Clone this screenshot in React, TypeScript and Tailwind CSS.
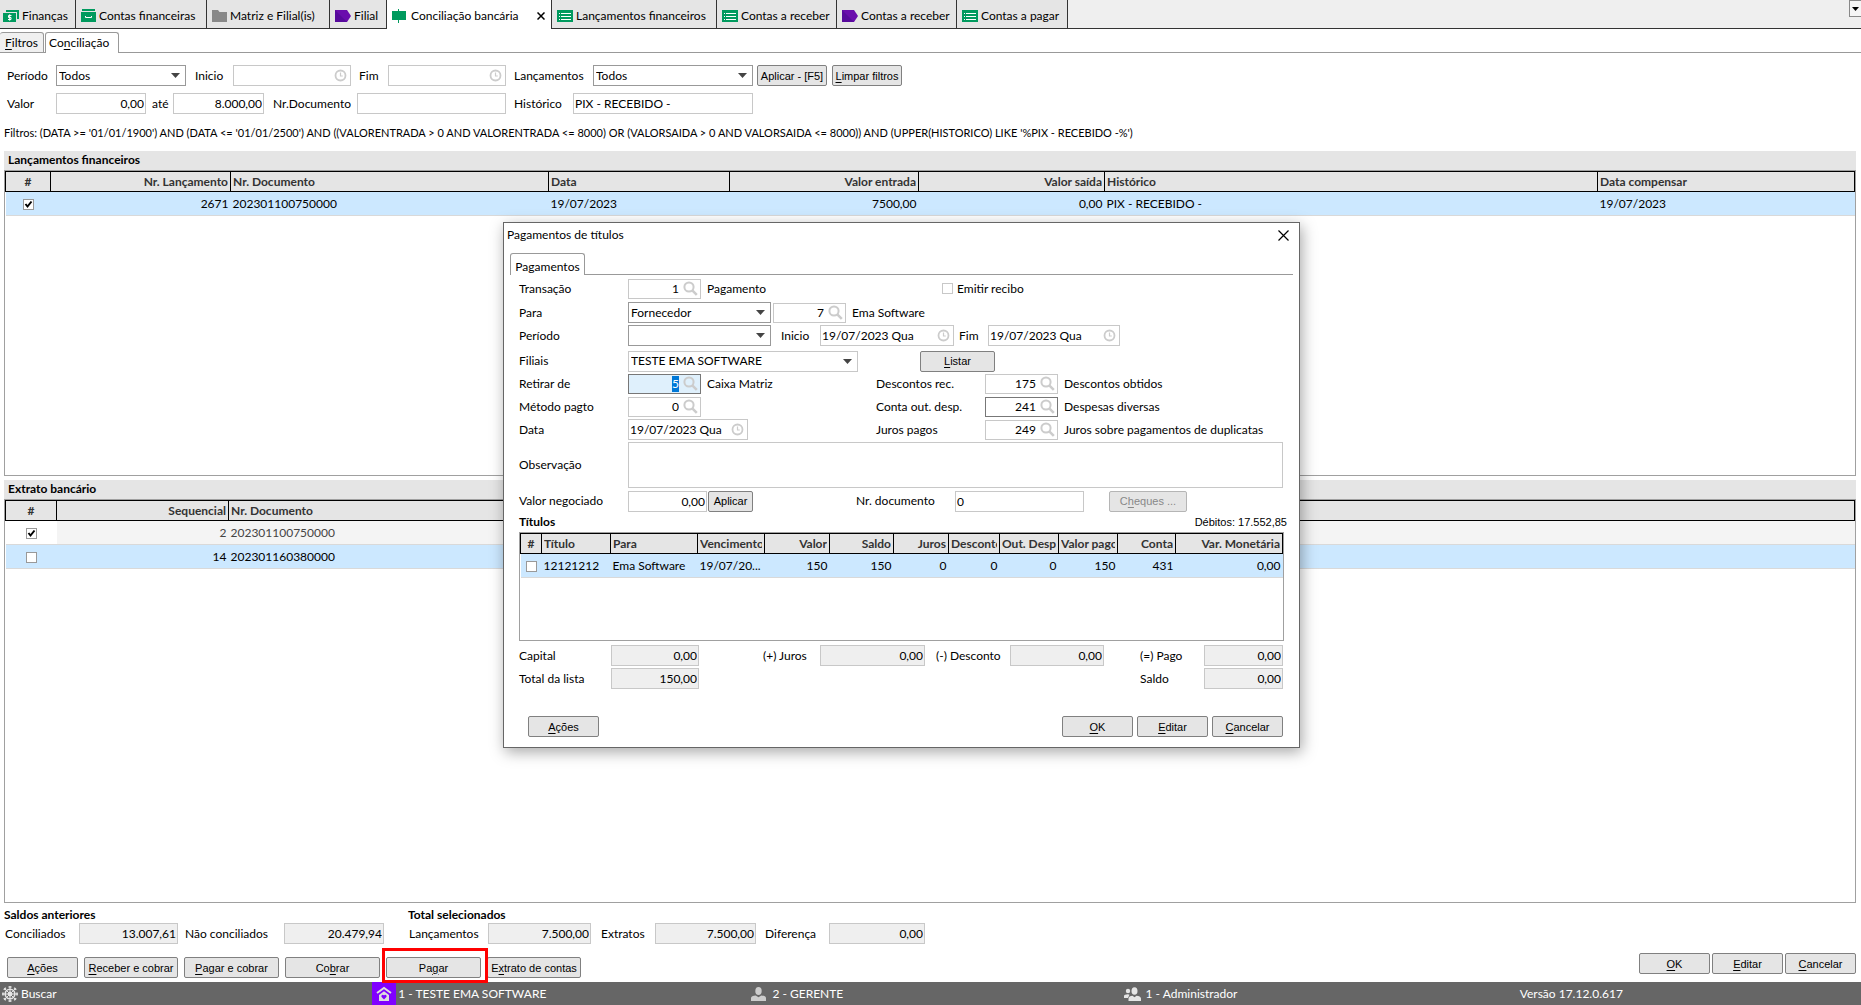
import { useEffect, useRef, type ReactNode } from "react";
import clsx from "clsx";

const text = "font-[Lato,'Open_Sans',sans-serif] text-[12px] leading-4 text-black";

/* "&Pagar" -> underlined P */
function Mnemonic({ label }: { label: string }) {
  const at = label.indexOf("&");
  if (at < 0) return <>{label}</>;
  return (
    <span>
      {label.slice(0, at)}
      <u className="underline-offset-2">{label[at + 1]}</u>
      {label.slice(at + 2)}
    </span>
  );
}

/* Icons */
function MoneyIcon() {
  return (
    <svg width="16" height="12" viewBox="0 0 16 12">
      <path d="M3 0h13v9h-2V2H3z" fill="#009a5e" />
      <rect y="3" width="13" height="9" fill="#009a5e" />
      <path
        d="M8.5 5.5h-3v2h2.5v2h-3M6.7 4.3v6.4"
        fill="none"
        stroke="#fff"
        strokeWidth="1"
      />
    </svg>
  );
}

function DrawerIcon() {
  return (
    <svg width="15" height="13" viewBox="0 0 15 13">
      <path d="M1 0h13v2H1zM0 3h15v10H0z" fill="#009a5e" />
      <path d="M4.500 7v1.500h6V7" fill="none" stroke="#fff" />
    </svg>
  );
}

function FolderIcon() {
  return (
    <svg width="15" height="12" viewBox="0 0 15 12">
      <path d="M0 0h6l1.500 2H15v10H0z" fill="#888" />
    </svg>
  );
}

function TagIcon() {
  return (
    <svg width="16" height="12" viewBox="0 0 16 12">
      <path d="M0 0h12l4 6-4 6H0z" fill="#6a0dad" />
      <path d="M0 0l12 12H0z" fill="#570a9c" />
    </svg>
  );
}

function SignIcon() {
  return (
    <svg width="14" height="14" viewBox="0 0 14 14">
      <path d="M0 2h14v9H0zM6 0h1v14H6z" fill="#009a5e" />
    </svg>
  );
}

function ListIcon() {
  return (
    <svg width="16" height="12" viewBox="0 0 16 12">
      <rect width="16" height="12" fill="#009a5e" />
      <path
        d="M2 3.500h1M2 6.500h1M2 9.500h1M4 3.500h10M4 6.500h10M4 9.500h10"
        stroke="#fff"
        strokeWidth="1"
      />
    </svg>
  );
}

function SearchIcon() {
  return (
    <svg width="15" height="15" viewBox="0 0 15 15" className="shrink-0">
      <circle cx="6" cy="6" r="4.600" fill="none" stroke="#ccc" strokeWidth="2" />
      <path d="M9.300 9.300l4.500 4.500" stroke="#ccc" strokeWidth="2.600" />
    </svg>
  );
}

function ClockIcon() {
  return (
    <svg width="13" height="13" viewBox="0 0 13 13" className="shrink-0">
      <circle cx="6.500" cy="6.500" r="5" fill="none" stroke="#ccc" strokeWidth="1.800" />
      <path d="M6.500 3.500v3.500h2.300" fill="none" stroke="#ccc" strokeWidth="1.200" />
    </svg>
  );
}

function WheelIcon() {
  return (
    <svg width="16" height="16" viewBox="0 0 16 16" stroke="#e5e5e5" fill="none">
      <circle cx="8" cy="8" r="4.800" strokeWidth="1.600" />
      <circle cx="8" cy="8" r="1.700" strokeWidth="1.400" />
      <path d="M8 0v16M0 8h16M2.400 2.400l11.200 11.200M13.600 2.400L2.400 13.600" />
      <path
        d="M6.500 1h3M6.500 15h3M1 6.500v3M15 6.500v3M1.800 3.800l2-2M12.200 1.800l2 2M1.800 12.200l2 2M12.200 14.200l2-2"
        strokeWidth="1.500"
      />
    </svg>
  );
}

function HomeIcon() {
  return (
    <svg width="16" height="16" viewBox="0 0 16 16">
      <path d="M1 7L8 2l7 5" fill="none" stroke="#ddd" strokeWidth="2" />
      <path d="M3 9l5-3.800L13 9v6H3z" fill="#ddd" />
      <path
        d="M8 13.500L5.600 11a1.400 1.400 0 0 1 2.400-1.600 1.400 1.400 0 0 1 2.400 1.600z"
        fill="#8000ff"
      />
    </svg>
  );
}

function UserIcon() {
  return (
    <svg width="15" height="14" viewBox="0 0 15 14" fill="#ccc">
      <ellipse cx="7.500" cy="4" rx="3.200" ry="4" />
      <path d="M0 14v-3c0-1.500 2-2.300 4.700-2.500l2.800 1.800 2.800-1.800C13 8.700 15 9.500 15 11v3z" />
    </svg>
  );
}

function UsersIcon() {
  return (
    <svg width="17" height="14" viewBox="0 0 17 14" fill="#e5e5e5">
      <circle cx="4" cy="4" r="2.200" />
      <path d="M0 11V9c0-1 1.500-1.800 4-1.800l1.500.6L4 11z" />
      <ellipse cx="10.500" cy="4" rx="3" ry="3.800" />
      <path d="M4.500 14v-2.500c0-1.500 1.800-2.500 4-2.700l2 1.500 2-1.500c2.500.2 4.500 1.200 4.500 2.700V14z" />
    </svg>
  );
}

/* Form controls */
function Field({
  label,
  width,
  className,
  children,
}: {
  label: string;
  width: string;
  className?: string;
  children: ReactNode;
}) {
  return (
    <label className={clsx("flex items-center whitespace-nowrap", className)}>
      <span className={clsx("shrink-0", width)}>{label}</span>
      {children}
    </label>
  );
}

function TextBox({
  value = "",
  width,
  right,
  readOnly,
}: {
  value?: string;
  width: string;
  right?: boolean;
  readOnly?: boolean;
}) {
  return (
    <input
      type="text"
      defaultValue={value}
      readOnly={readOnly}
      className={clsx(
        "h-[21px] border border-[#c8c8c8] px-px outline-none",
        readOnly ? "bg-[#efefef]" : "bg-white",
        right && "text-right",
        width,
      )}
    />
  );
}

function DateBox({ value = "", width }: { value?: string; width: string }) {
  return (
    <span
      className={clsx(
        "flex h-[21px] items-center border border-[#c8c8c8] bg-white pr-[3px] pl-px",
        width,
      )}
    >
      <input
        type="text"
        defaultValue={value}
        className="w-full min-w-0 outline-none"
      />
      <ClockIcon />
    </span>
  );
}

function CodeBox({
  value,
  label,
  active,
  strong,
}: {
  value: string;
  label?: string;
  active?: boolean;
  strong?: boolean;
}) {
  const ref = useRef<HTMLInputElement>(null);

  useEffect(() => {
    if (active) {
      ref.current?.focus();
      ref.current?.select();
    }
  }, [active]);

  return (
    <span
      className={clsx(
        "flex h-5 w-[73px] items-center gap-1 border pr-[2px]",
        active ? "border-[#777] bg-[#dff0fc]" : "bg-white",
        !active && (strong ? "border-[#777]" : "border-[#c8c8c8]"),
      )}
    >
      <input
        ref={ref}
        type="text"
        aria-label={label}
        defaultValue={value}
        className="w-full min-w-0 text-right outline-none selection:bg-[#0078d7] selection:text-white"
      />
      <SearchIcon />
    </span>
  );
}

function Select({
  value = "",
  width,
  light,
}: {
  value?: string;
  width: string;
  light?: boolean;
}) {
  return (
    <span className={clsx("relative flex h-[21px]", width)}>
      <select
        defaultValue={value}
        className={clsx(
          "w-full appearance-none border bg-white pr-5 pl-[2px] outline-none",
          light ? "border-[#c8c8c8]" : "border-[#999]",
        )}
      >
        <option>{value}</option>
      </select>
      <svg
        width="9"
        height="5"
        viewBox="0 0 9 5"
        className="pointer-events-none absolute top-2 right-[6px]"
      >
        <path d="M0 0h9L4.500 5z" fill="#444" />
      </svg>
    </span>
  );
}

function Button({
  label,
  width,
  disabled,
}: {
  label: string;
  width: string;
  disabled?: boolean;
}) {
  return (
    <button
      type="button"
      disabled={disabled}
      className={clsx(
        "h-[21px] shrink-0 rounded-[2px] border bg-[#e5e5e5] font-['Liberation_Sans',Arial,sans-serif] text-[11px] leading-4 whitespace-nowrap",
        disabled ? "border-[#b5b5b5] text-[#888]" : "border-[#808080]",
        width,
      )}
    >
      <Mnemonic label={label} />
    </button>
  );
}

function CheckBox({ label, checked }: { label: string; checked?: boolean }) {
  return (
    <span className="relative inline-flex size-[11px] align-middle">
      <input
        type="checkbox"
        aria-label={label}
        defaultChecked={checked}
        className="peer size-[11px] appearance-none border border-[#999] bg-white"
      />
      <svg
        width="11"
        height="11"
        viewBox="0 0 11 11"
        className="pointer-events-none absolute inset-0 hidden peer-checked:block"
      >
        <path d="M2.500 5l2 2.500 4-5" fill="none" stroke="#000" strokeWidth="2" />
      </svg>
    </span>
  );
}

/* Grid */
type Column = { title: string; width: string; right?: boolean; center?: boolean };
type Row = {
  checked?: boolean;
  selected?: boolean;
  cells: string[];
};

function DataGrid({ columns, rows }: { columns: Column[]; rows: Row[] }) {
  return (
    <div className="min-h-0 flex-1 overflow-hidden border border-[#a0a0a0] bg-white">
      <table className="w-full table-fixed border-collapse">
        <colgroup>
          {columns.map((c) => (
            <col key={c.title} className={c.width} />
          ))}
        </colgroup>
        <thead>
          <tr className="h-5 bg-[#e5e5e5]">
            {columns.map((c) => (
              <th
                key={c.title}
                className={clsx(
                  "border border-black px-[2px] py-0 font-bold text-[#333]",
                  c.center ? "text-center" : c.right ? "text-right" : "text-left",
                )}
              >
                <div className="overflow-hidden whitespace-nowrap">{c.title}</div>
              </th>
            ))}
          </tr>
        </thead>
        <tbody>
          {rows.map((row) => (
            <tr
              key={row.cells.join()}
              className={clsx(
                "h-6 border-b border-[#d9d9d9]",
                row.selected ? "bg-[#cce8ff]" : "bg-[#f4f4f4] text-[#444]",
              )}
            >
              <td
                className={clsx(
                  "p-0 text-center leading-none",
                  !row.selected && "bg-white",
                )}
              >
                <CheckBox label={"Selecionar " + row.cells[0]} checked={row.checked} />
              </td>
              {row.cells.map((cell, i) => (
                <td
                  key={i}
                  className={clsx(
                    "overflow-hidden px-[2px] py-0 whitespace-nowrap",
                    columns[i + 1].right && "text-right",
                  )}
                >
                  {cell}
                </td>
              ))}
            </tr>
          ))}
        </tbody>
      </table>
    </div>
  );
}

/* Data */
const tabs = [
  { label: "Finanças", icon: <MoneyIcon />, width: "w-[76px] pl-[3px]" },
  { label: "Contas financeiras", icon: <DrawerIcon />, width: "w-[131px] pl-[5px]" },
  { label: "Matriz e Filial(is)", icon: <FolderIcon />, width: "w-[123px] pl-[5px]" },
  { label: "Filial", icon: <TagIcon />, width: "w-[57px] pl-[5px]" },
  { label: "Conciliação bancária", icon: <SignIcon />, width: "w-[165px] pl-[5px]", active: true },
  { label: "Lançamentos financeiros", icon: <ListIcon />, width: "w-[165px] pl-[5px]" },
  { label: "Contas a receber", icon: <ListIcon />, width: "w-[120px] pl-[5px]" },
  { label: "Contas a receber", icon: <TagIcon />, width: "w-[120px] pl-[5px]" },
  { label: "Contas a pagar", icon: <ListIcon />, width: "w-[111px] pl-[5px]" },
];

const lancamentoColumns: Column[] = [
  { title: "#", width: "w-[45px]", center: true },
  { title: "Nr. Lançamento", width: "w-[180px]", right: true },
  { title: "Nr. Documento", width: "w-[318px]" },
  { title: "Data", width: "w-[181px]" },
  { title: "Valor entrada", width: "w-[189px]", right: true },
  { title: "Valor saída", width: "w-[186px]", right: true },
  { title: "Histórico", width: "w-[493px]" },
  { title: "Data compensar", width: "w-auto" },
];

const lancamentos: Row[] = [
  {
    checked: true,
    selected: true,
    cells: ["2671", "202301100750000", "19/07/2023", "7500,00", "0,00", "PIX - RECEBIDO -", "19/07/2023"],
  },
];

const extratoColumns: Column[] = [
  { title: "#", width: "w-[51px]", center: true },
  { title: "Sequencial", width: "w-[172px]", right: true },
  { title: "Nr. Documento", width: "w-auto" },
];

const extratos: Row[] = [
  { checked: true, cells: ["2", "202301100750000"] },
  { selected: true, cells: ["14", "202301160380000"] },
];

const tituloColumns: Column[] = [
  { title: "#", width: "w-[21px]", center: true },
  { title: "Título", width: "w-[69px]" },
  { title: "Para", width: "w-[87px]" },
  { title: "Vencimento", width: "w-[67px]" },
  { title: "Valor", width: "w-[65px]", right: true },
  { title: "Saldo", width: "w-[64px]", right: true },
  { title: "Juros", width: "w-[55px]", right: true },
  { title: "Desconto", width: "w-[51px]", right: true },
  { title: "Out. Desp", width: "w-[59px]", right: true },
  { title: "Valor pago", width: "w-[59px]", right: true },
  { title: "Conta", width: "w-[58px]", right: true },
  { title: "Var. Monetária", width: "w-auto", right: true },
];

const titulos: Row[] = [
  {
    selected: true,
    cells: ["12121212", "Ema Software", "19/07/20...", "150", "150", "0", "0", "0", "150", "431", "0,00"],
  },
];

function TopTabs() {
  return (
    <nav className="flex h-[29px] bg-[#efefef]">
      {tabs.map((tab, i) => (
        <div
          key={i}
          className={clsx(
            "flex shrink-0 items-center border-r border-[#333] pt-[3px]",
            tab.active ? "bg-white" : "border-b bg-[#e5e5e5]",
            tab.width,
          )}
        >
          <button
            type="button"
            className={clsx(
              "flex items-center whitespace-nowrap",
              tab.active ? "gap-[5px]" : "gap-[3px]",
            )}
          >
            {tab.icon}
            {tab.label}
          </button>
          {tab.active && (
            <button type="button" aria-label="Fechar" className="mr-[6px] ml-auto">
              <svg width="8" height="8" viewBox="0 0 8 8">
                <path d="M.5 .5l7 7M7.500 .5l-7 7" stroke="#000" strokeWidth="1.500" />
              </svg>
            </button>
          )}
        </div>
      ))}
      <div className="flex flex-1 justify-end border-b border-[#333]">
        <button
          type="button"
          aria-label="Mais abas"
          className="flex h-[17px] w-3 items-center justify-center border border-r-0 border-[#888] bg-[#f5f5f5]"
        >
          <svg width="7" height="4" viewBox="0 0 7 4">
            <path d="M0 0h7L3.500 4z" />
          </svg>
        </button>
      </div>
    </nav>
  );
}

function Filters() {
  return (
    <form className="flex flex-col gap-[7px] pt-3 pl-[7px]">
      <div className="flex items-center">
        <Field label="Período" width="w-[49px]">
          <Select value="Todos" width="w-[130px]" />
        </Field>
        <Field label="Inicio" width="w-[38px]" className="ml-[9px]">
          <DateBox width="w-[118px]" />
        </Field>
        <Field label="Fim" width="w-[29px]" className="ml-2">
          <DateBox width="w-[118px]" />
        </Field>
        <Field label="Lançamentos" width="w-[79px]" className="ml-2">
          <Select value="Todos" width="w-[160px]" />
        </Field>
        <div className="ml-1 flex gap-[5px]">
          <Button label="Aplicar - [F5]" width="w-[70px]" />
          <Button label="&Limpar filtros" width="w-[70px]" />
        </div>
      </div>
      <div className="flex items-center">
        <Field label="Valor" width="w-[49px]">
          <TextBox value="0,00" width="w-[90px]" right />
        </Field>
        <Field label="até" width="w-[21px]" className="ml-[6px]">
          <TextBox value="8.000,00" width="w-[91px]" right />
        </Field>
        <Field label="Nr.Documento" width="w-[84px]" className="ml-[9px]">
          <TextBox width="w-[149px]" />
        </Field>
        <Field label="Histórico" width="w-[59px]" className="ml-2">
          <TextBox value="PIX - RECEBIDO -" width="w-[180px]" />
        </Field>
      </div>
    </form>
  );
}

function Totals() {
  return (
    <section className="flex px-1">
      <div className="w-[404px]">
        <h2 className="font-bold">Saldos anteriores</h2>
        <div className="flex">
          <Field label="Conciliados" width="w-[74px]" className="pl-px">
            <TextBox value="13.007,61" width="w-[99px]" right readOnly />
          </Field>
          <Field label="Não conciliados" width="w-[99px]" className="ml-[7px]">
            <TextBox value="20.479,94" width="w-[100px]" right readOnly />
          </Field>
        </div>
      </div>
      <div>
        <h2 className="font-bold">Total selecionados</h2>
        <div className="flex">
          <Field label="Lançamentos" width="w-[79px]" className="pl-px">
            <TextBox value="7.500,00" width="w-[103px]" right readOnly />
          </Field>
          <Field label="Extratos" width="w-[54px]" className="ml-[10px]">
            <TextBox value="7.500,00" width="w-[101px]" right readOnly />
          </Field>
          <Field label="Diferença" width="w-[64px]" className="ml-[9px]">
            <TextBox value="0,00" width="w-[96px]" right readOnly />
          </Field>
        </div>
      </div>
    </section>
  );
}

function Actions() {
  return (
    <section className="flex justify-between pt-[9px] pr-[5px] pb-1 pl-[7px]">
      <div className="flex gap-[6px] pt-1">
        <Button label="&Ações" width="w-[71px]" />
        <Button label="&Receber e cobrar" width="w-[94px]" />
        <Button label="&Pagar e cobrar" width="w-[95px]" />
        <Button label="Co&brar" width="w-[95px]" />
        <div className="relative flex">
          <Button label="Pa&gar" width="w-[95px]" />
          <span className="pointer-events-none absolute -top-[9px] -right-[7px] -bottom-[5px] -left-1 z-10 border-3 border-[#ff0000]" />
        </div>
        <Button label="E&xtrato de contas" width="w-[94px]" />
      </div>
      <div className="flex gap-[2px]">
        <Button label="&OK" width="w-[71px]" />
        <Button label="&Editar" width="w-[71px]" />
        <Button label="&Cancelar" width="w-[71px]" />
      </div>
    </section>
  );
}

function StatusBar() {
  return (
    <footer className="grid h-[23px] grid-cols-[20%_20%_20%_20%_20%] bg-[#666] text-white">
      <div className="flex items-center gap-[3px] pl-[2px]">
        <WheelIcon />
        Buscar
      </div>
      <div className="flex items-center gap-[2px]">
        <span className="flex h-full w-6 items-center justify-center bg-[#8000ff]">
          <HomeIcon />
        </span>
        1 - TESTE EMA SOFTWARE
      </div>
      <div className="flex items-center gap-[6px] pl-[7px]">
        <UserIcon />2 - GERENTE
      </div>
      <div className="flex items-center gap-[5px] pl-[7px]">
        <UsersIcon />1 - Administrador
      </div>
      <div className="flex items-center pl-[31px]">Versão 17.12.0.617</div>
    </footer>
  );
}

function PaymentDialog() {
  return (
    <div
      role="dialog"
      aria-label="Pagamentos de títulos"
      className="absolute top-[222px] left-[503px] z-20 flex w-[797px] flex-col border border-[#666] bg-white pb-[10px] shadow-[2px_4px_14px_rgba(0,0,0,0.35)]"
    >
      <header className="flex h-6 items-center justify-between pr-[10px] pl-[3px]">
        <h1>Pagamentos de títulos</h1>
        <button type="button" aria-label="Fechar">
          <svg width="11" height="11" viewBox="0 0 11 11">
            <path d="M.5 .5l10 10M10.500 .5l-10 10" stroke="#000" strokeWidth="1.200" />
          </svg>
        </button>
      </header>

      <div className="mt-[6px] flex px-[6px]">
        <button
          type="button"
          className="h-[22px] w-[75px] rounded-t-[3px] border border-b-0 border-[#999] pt-1"
        >
          Pagamentos
        </button>
        <div className="flex-1 border-b border-[#999]" />
      </div>

      <div className="flex flex-col gap-[2px] pt-[3px] pr-[16px] pl-[15px]">
        <div className="flex h-[21px] items-center">
          <Field label="Transação" width="w-[109px]">
            <CodeBox value="1" />
          </Field>
          <span className="ml-[6px] w-[235px]">Pagamento</span>
          <label className="flex items-center gap-1">
            <input
              type="checkbox"
              className="size-[11px] appearance-none border border-[#c8c8c8] bg-white"
            />
            Emitir recibo
          </label>
        </div>

        <div className="mt-px flex h-[21px] items-center">
          <Field label="Para" width="w-[109px]">
            <Select value="Fornecedor" width="w-[143px]" />
          </Field>
          <div className="ml-[2px]">
            <CodeBox value="7" label="Código do fornecedor" />
          </div>
          <span className="ml-[6px]">Ema Software</span>
        </div>

        <div className="flex h-[21px] items-center">
          <Field label="Período" width="w-[109px]">
            <Select width="w-[143px]" />
          </Field>
          <Field label="Inicio" width="w-[39px]" className="ml-[10px]">
            <DateBox value="19/07/2023 Qua" width="w-[134px]" />
          </Field>
          <Field label="Fim" width="w-[29px]" className="ml-[5px]">
            <DateBox value="19/07/2023 Qua" width="w-[132px]" />
          </Field>
        </div>

        <div className="mt-[3px] flex h-5 items-center">
          <Field label="Filiais" width="w-[109px]" className="mr-[62px]">
            <Select value="TESTE EMA SOFTWARE" width="w-[230px]" light />
          </Field>
          <Button label="&Listar" width="w-[75px]" />
        </div>

        <div className="flex h-[21px] items-center">
          <div className="flex w-[357px] items-center">
            <Field label="Retirar de" width="w-[109px]">
              <CodeBox value="5" active />
            </Field>
            <span className="ml-[6px]">Caixa Matriz</span>
          </div>
          <Field label="Descontos rec." width="w-[109px]">
            <CodeBox value="175" />
          </Field>
          <span className="ml-[6px]">Descontos obtidos</span>
        </div>

        <div className="flex h-[21px] items-center">
          <div className="flex w-[357px] items-center">
            <Field label="Método pagto" width="w-[109px]">
              <CodeBox value="0" />
            </Field>
          </div>
          <Field label="Conta out. desp." width="w-[109px]">
            <CodeBox value="241" strong />
          </Field>
          <span className="ml-[6px]">Despesas diversas</span>
        </div>

        <div className="flex h-[21px] items-center">
          <div className="flex w-[357px] items-center">
            <Field label="Data" width="w-[109px]">
              <DateBox value="19/07/2023 Qua" width="w-[120px]" />
            </Field>
          </div>
          <Field label="Juros pagos" width="w-[109px]">
            <CodeBox value="249" />
          </Field>
          <span className="ml-[6px]">Juros sobre pagamentos de duplicatas</span>
        </div>

        <Field label="Observação" width="w-[109px]">
          <textarea className="h-[46px] flex-1 resize-none border border-[#c8c8c8] outline-none" />
        </Field>

        <div className="flex h-[22px] items-center">
          <Field label="Valor negociado" width="w-[109px]">
            <TextBox value="0,00" width="w-[79px]" right />
          </Field>
          <div className="mr-[103px] ml-px flex">
            <Button label="Aplicar" width="w-[45px]" />
          </div>
          <Field label="Nr. documento" width="w-[99px]" className="mr-[25px]">
            <TextBox value="0" width="w-[129px]" />
          </Field>
          <Button label="C&heques ..." width="w-[78px]" disabled />
        </div>

        <div className="flex items-center justify-between">
          <h2 className="font-bold">Títulos</h2>
          <span className="-mr-1 font-['Liberation_Sans',Arial,sans-serif] text-[11px]">
            Débitos: 17.552,85
          </span>
        </div>

        <div className="-mr-px flex h-[109px] flex-col">
          <DataGrid columns={tituloColumns} rows={titulos} />
        </div>

        <div className="mt-[2px] flex items-center">
          <Field label="Capital" width="w-[92px]">
            <TextBox value="0,00" width="w-[88px]" right readOnly />
          </Field>
          <Field label="(+) Juros" width="w-[57px]" className="ml-16">
            <TextBox value="0,00" width="w-[105px]" right readOnly />
          </Field>
          <Field label="(-) Desconto" width="w-[74px]" className="ml-[11px]">
            <TextBox value="0,00" width="w-[94px]" right readOnly />
          </Field>
          <Field label="(=) Pago" width="w-16" className="ml-auto">
            <TextBox value="0,00" width="w-[79px]" right readOnly />
          </Field>
        </div>
        <div className="flex items-center justify-between">
          <Field label="Total da lista" width="w-[92px]">
            <TextBox value="150,00" width="w-[88px]" right readOnly />
          </Field>
          <Field label="Saldo" width="w-16">
            <TextBox value="0,00" width="w-[79px]" right readOnly />
          </Field>
        </div>
      </div>

      <footer className="mt-[27px] flex justify-between pr-[16px] pl-6">
        <Button label="&Ações" width="w-[71px]" />
        <div className="flex gap-1">
          <Button label="&OK" width="w-[71px]" />
          <Button label="&Editar" width="w-[71px]" />
          <Button label="&Cancelar" width="w-[71px]" />
        </div>
      </footer>
    </div>
  );
}

export default function App() {
  return (
    <div className={clsx("relative flex min-h-screen flex-col bg-white", text)}>
      <TopTabs />

      <div className="flex h-6 items-end pt-[3px]">
        <button
          type="button"
          className="h-[21px] w-11 rounded-t-[3px] border border-l-0 border-[#999] bg-[#f0f0f0]"
        >
          <Mnemonic label="&Filtros" />
        </button>
        <div className="h-full w-px border-b border-[#999]" />
        <button
          type="button"
          className="h-[21px] w-[74px] rounded-t-[3px] border border-b-0 border-[#999] bg-white pl-[3px] text-left"
        >
          <Mnemonic label="Co&nciliação" />
        </button>
        <div className="h-full flex-1 border-b border-[#999]" />
      </div>

      <main className="flex flex-1 flex-col">
        <Filters />
        <p className="pt-[11px] pb-[10px] pl-1 text-[11px]">
          {
            "Filtros: (DATA >= '01/01/1900') AND (DATA <= '01/01/2500') AND ((VALORENTRADA > 0 AND VALORENTRADA <= 8000) OR (VALORSAIDA > 0 AND VALORSAIDA <= 8000)) AND (UPPER(HISTORICO) LIKE '%PIX - RECEBIDO -%')"
          }
        </p>

        <div className="flex flex-1 flex-col gap-1 pr-[5px] pl-1">
          <section className="flex grow-[10] basis-0 flex-col">
            <h2 className="bg-[#e5e5e5] pt-px pb-[2px] pl-1 font-bold">
              Lançamentos financeiros
            </h2>
            <DataGrid columns={lancamentoColumns} rows={lancamentos} />
          </section>
          <section className="flex grow-[13] basis-0 flex-col">
            <h2 className="bg-[#e5e5e5] pt-px pb-[2px] pl-1 font-bold">
              Extrato bancário
            </h2>
            <DataGrid columns={extratoColumns} rows={extratos} />
          </section>
        </div>

        <div className="pt-1">
          <Totals />
          <Actions />
        </div>
      </main>

      <StatusBar />
      <PaymentDialog />
    </div>
  );
}
